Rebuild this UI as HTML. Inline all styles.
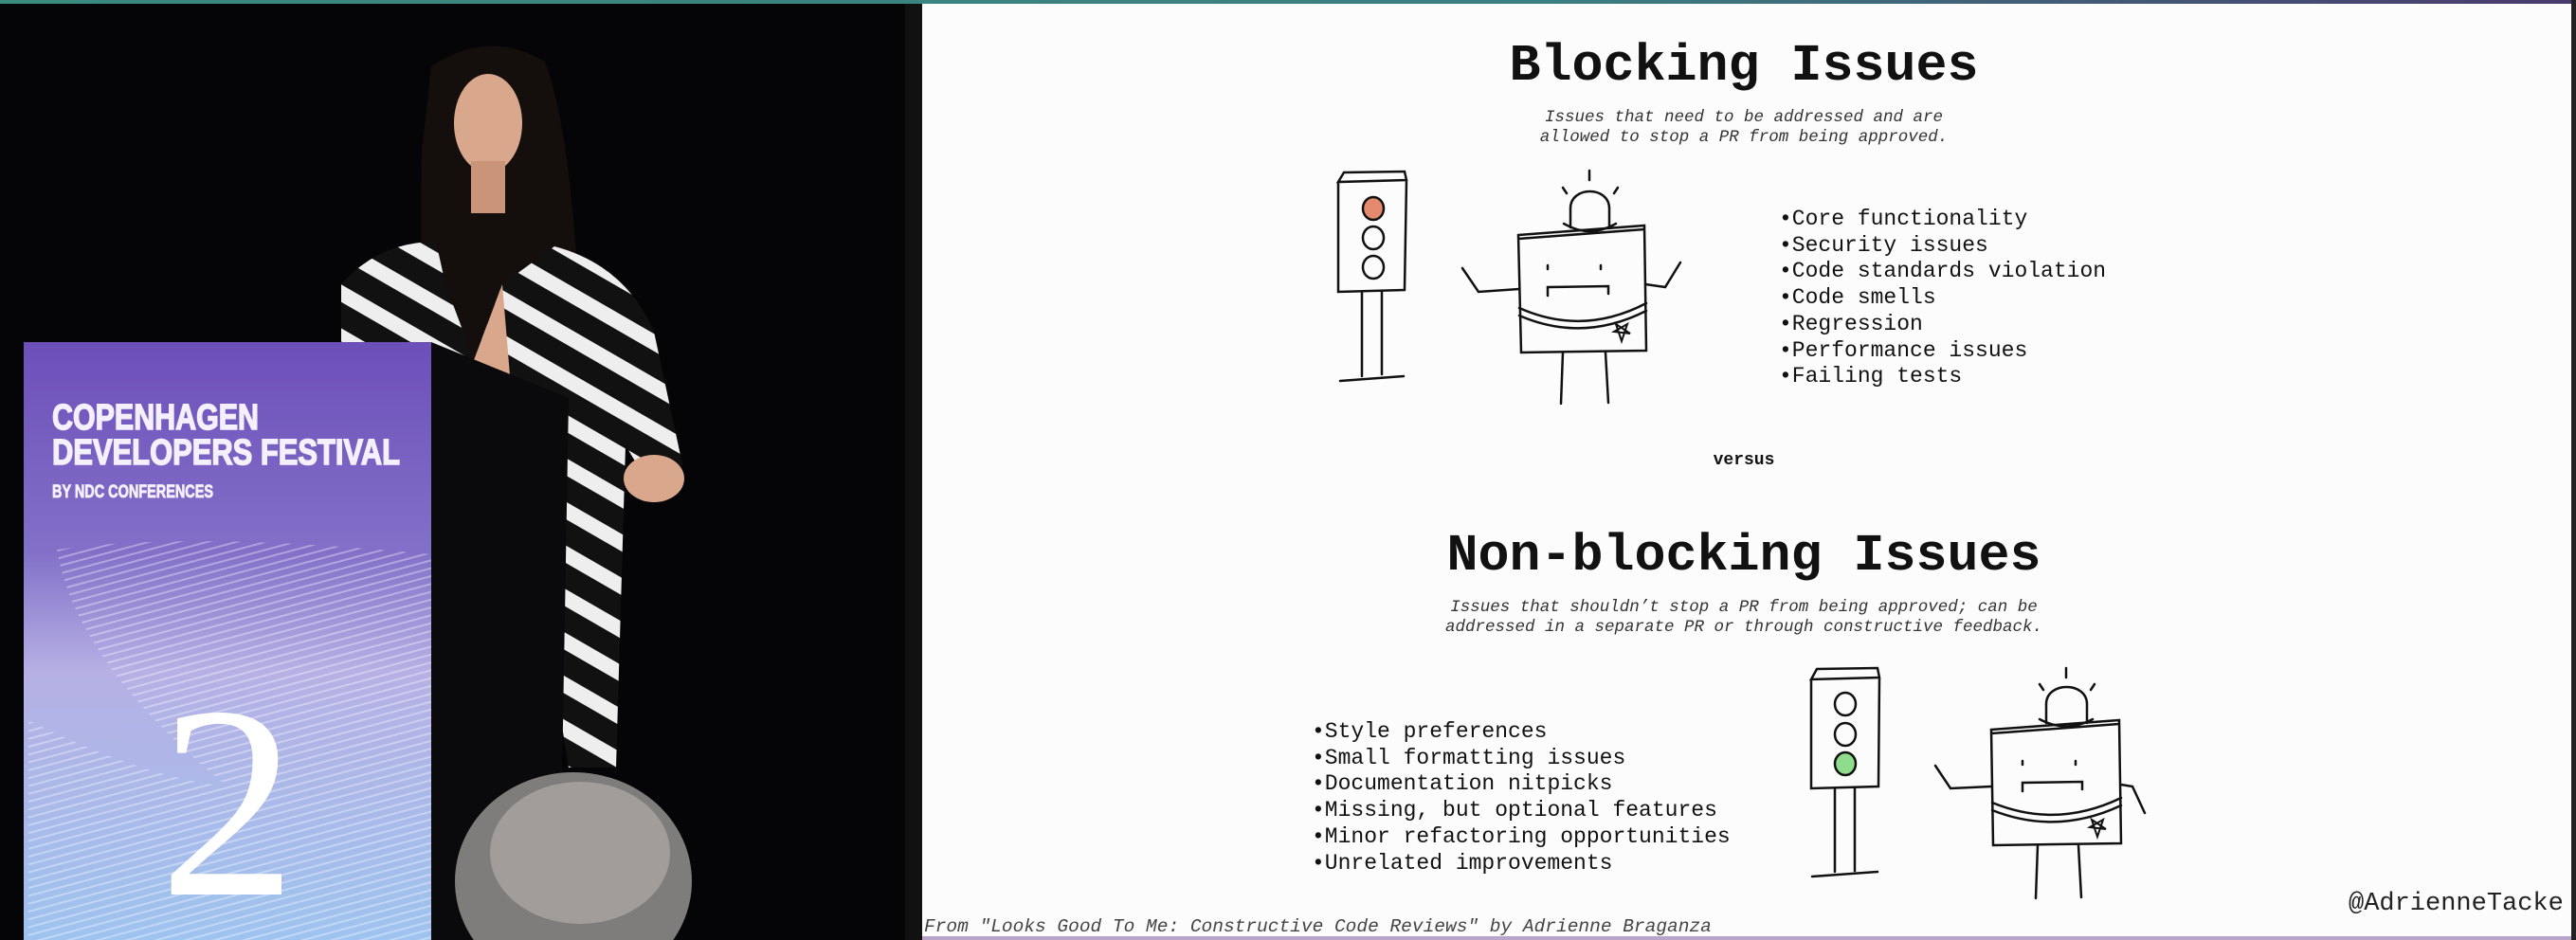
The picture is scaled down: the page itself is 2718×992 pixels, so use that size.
<!DOCTYPE html>
<html><head><meta charset="utf-8">
<style>
*{margin:0;padding:0;box-sizing:border-box}
html,body{width:2718px;height:992px;overflow:hidden;background:#050507}
#wrap{position:relative;width:2718px;height:992px;overflow:hidden}
.slide{position:absolute;left:973px;top:4px;width:1740px;height:984px;background:#fcfcfc}
.t{position:absolute;font-family:"Liberation Mono",monospace;color:#111;white-space:nowrap}
.title{font-size:55px;font-weight:bold;transform:translateX(-50%);text-align:center}
.sub{font-size:17.5px;font-style:italic;color:#333;text-align:center;transform:translateX(-50%);line-height:21px}
.li{font-size:23px;line-height:27.7px}
</style></head><body><div id="wrap">
<div style="position:absolute;left:0;top:0;width:2718px;height:4px;background:linear-gradient(90deg,#3b8a7e,#3b7f80 60%,#4a3a6e)"></div>
<svg style="position:absolute;left:0;top:4px" width="973" height="988" viewBox="0 4 973 988">
<defs>
<linearGradient id="pod" x1="0" y1="0" x2="0" y2="1">
<stop offset="0" stop-color="#6d4fb9"/><stop offset="0.35" stop-color="#8270c8"/><stop offset="0.55" stop-color="#b6b0e4"/><stop offset="1" stop-color="#9ec3ee"/></linearGradient>
<pattern id="str" width="40" height="40" patternUnits="userSpaceOnUse" patternTransform="rotate(30)">
<rect width="40" height="40" fill="#111"/><rect width="40" height="16" fill="#eee"/></pattern>
<pattern id="waves" width="8" height="8" patternUnits="userSpaceOnUse" patternTransform="rotate(-15)">
<rect width="8" height="8" fill="none"/><rect width="8" height="2" fill="#ffffff" opacity="0.35"/></pattern>
</defs>
<rect x="0" y="4" width="973" height="988" fill="#050507"/>
<path d="M455 70 Q515 30 575 65 Q600 130 610 300 Q610 420 580 560 L470 560 Q440 400 445 160 Z" fill="#140e0c"/>
<ellipse cx="515" cy="130" rx="36" ry="52" fill="#d9a88c"/>
<rect x="497" y="170" width="36" height="55" fill="#c99478"/>
<path d="M360 300 Q400 255 460 255 L470 300 L500 380 L530 300 L585 260 Q660 280 690 350 L720 490 L690 520 L660 470 L650 810 L600 810 L560 560 L470 470 L400 420 L360 360 Z" fill="url(#str)"/>
<path d="M500 380 L530 300 L540 420 Z" fill="#d9a88c"/>
<ellipse cx="535" cy="480" rx="40" ry="20" fill="#d9a88c"/>
<ellipse cx="690" cy="505" rx="32" ry="25" fill="#d9a88c"/>
<path d="M455 361 L600 420 L590 992 L455 992 Z" fill="#0a0a0c"/>
<rect x="25" y="361" width="430" height="631" fill="url(#pod)"/>
<path d="M60 580 Q200 560 455 585 L455 992 L30 992 L30 760 Q150 820 240 830 Q80 700 60 580 Z" fill="url(#waves)"/>
<g font-family="Liberation Sans,sans-serif" font-weight="bold" fill="#f4f0ff" stroke="#f4f0ff" stroke-width="1.5">
<text x="55" y="453" font-size="38" textLength="218" lengthAdjust="spacingAndGlyphs">COPENHAGEN</text>
<text x="55" y="490" font-size="38" textLength="367" lengthAdjust="spacingAndGlyphs">DEVELOPERS FESTIVAL</text>
<text x="55" y="525" font-size="19" stroke-width="0.8" textLength="170" lengthAdjust="spacingAndGlyphs">BY NDC CONFERENCES</text>
</g>
<text x="168" y="944" font-family="Liberation Serif,serif" font-size="290" fill="#ffffff">2</text>
<ellipse cx="605" cy="930" rx="125" ry="115" fill="#7f7d7b"/>
<ellipse cx="612" cy="900" rx="95" ry="75" fill="#a09d9a"/>
</svg>
<div style="position:absolute;left:955px;top:4px;width:18px;height:988px;background:#111"></div>
<div class="slide"></div>
<div style="position:absolute;left:973px;top:988px;width:1745px;height:4px;background:#b7a6c9"></div>
<div style="position:absolute;left:2713px;top:0;width:5px;height:992px;background:#222"></div>

<div class="t title" style="left:1840px;top:38px">Blocking Issues</div>
<div class="t sub" style="left:1840px;top:114px">Issues that need to be addressed and are<br>allowed to stop a PR from being approved.</div>
<div class="t li" style="left:1877px;top:218px">•Core functionality<br>•Security issues<br>•Code standards violation<br>•Code smells<br>•Regression<br>•Performance issues<br>•Failing tests</div>
<div class="t" style="left:1840px;top:476px;transform:translateX(-50%);font-size:18px;font-weight:bold">versus</div>

<div class="t title" style="left:1840px;top:555px">Non-blocking Issues</div>
<div class="t sub" style="left:1840px;top:631px">Issues that shouldn’t stop a PR from being approved; can be<br>addressed in a separate PR or through constructive feedback.</div>
<div class="t li" style="left:1384px;top:759px">•Style preferences<br>•Small formatting issues<br>•Documentation nitpicks<br>•Missing, but optional features<br>•Minor refactoring opportunities<br>•Unrelated improvements</div>
<div class="t" style="left:2478px;top:938px;font-size:27px;color:#222;line-height:32px">@AdrienneTacke</div>
<div class="t" style="left:975px;top:967px;font-size:19.5px;font-style:italic;color:#444;line-height:22px">From "Looks Good To Me: Constructive Code Reviews" by Adrienne Braganza</div>

<svg style="position:absolute;left:0;top:0" width="2718" height="992" fill="none" stroke="#111" stroke-width="2.5" stroke-linecap="round">
<path d="M1412 192 L1418 182 L1482 181 L1484 190 L1412 192 Z M1412 192 L1412 308 L1482 306 L1484 190"/>
<ellipse cx="1449" cy="220" rx="11" ry="12" fill="#e58a6e"/>
<ellipse cx="1449" cy="251" rx="11" ry="12"/>
<ellipse cx="1449" cy="282" rx="11" ry="12"/>
<path d="M1437 308 L1437 397 M1458 307 L1458 395 M1414 402 L1481 397"/>
<path d="M1657 240 L1657 220 C1657 196 1698 196 1698 220 L1698 240 M1650 236 Q1677 252 1705 236 M1677 180 L1677 190 M1649 198 L1653 204 M1707 198 L1703 204"/>
<path d="M1602 248 L1735 238 L1737 370 L1605 372 Z M1602 252 L1735 242 M1603 325 Q1670 355 1737 320 M1603 333 Q1670 362 1737 328"/>
<path d="M1543 283 L1560 308 L1603 305 M1773 277 L1757 303 L1736 300"/>
<path d="M1633 280 L1633 284 M1689 280 L1689 284 M1633 312 L1633 303 L1697 302 L1697 310"/>
<path d="M1705 342 L1711 360 L1717 342 L1703 350 L1720 352 Z" stroke-width="2"/>
<path d="M1649 372 L1647 426 M1694 372 L1697 425"/>
<path d="M1911 717 L1917 706 L1981 705 L1983 715 L1911 717 Z M1911 717 L1911 832 L1982 830 L1983 715"/>
<ellipse cx="1947" cy="743" rx="11" ry="12"/>
<ellipse cx="1947" cy="775" rx="11" ry="12"/>
<ellipse cx="1947" cy="806" rx="11" ry="12" fill="#8fdc8c"/>
<path d="M1936 832 L1936 920 M1957 831 L1957 919 M1912 925 L1981 920"/>
<path d="M2159 763 L2159 743 C2159 719 2202 719 2202 743 L2202 763 M2152 759 Q2180 774 2208 759 M2180 705 L2180 715 M2152 722 L2156 728 M2210 722 L2206 728"/>
<path d="M2101 770 L2236 760 L2238 890 L2103 892 Z M2101 774 L2236 764 M2102 847 Q2170 875 2238 842 M2102 855 Q2170 882 2238 850"/>
<path d="M2042 808 L2058 832 L2101 830 M2238 828 L2250 830 L2263 858"/>
<path d="M2134 803 L2134 807 M2190 803 L2190 807 M2134 835 L2134 826 L2197 825 L2197 833"/>
<path d="M2207 865 L2213 883 L2219 865 L2205 873 L2222 875 Z" stroke-width="2"/>
<path d="M2150 892 L2148 948 M2193 892 L2196 947"/>
</svg>
</div></body></html>
